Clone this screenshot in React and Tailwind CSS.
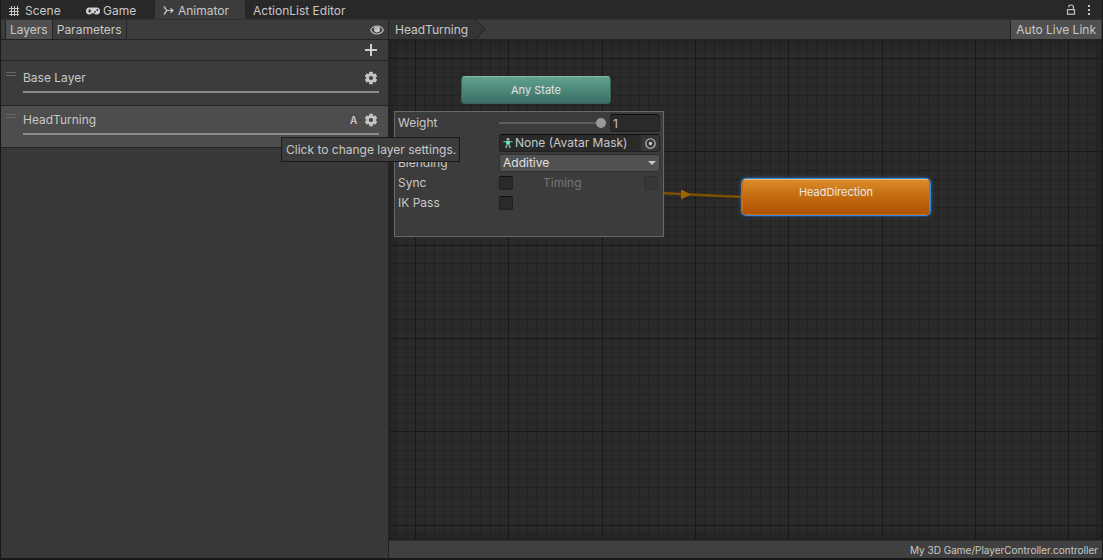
import React, { useState } from "react";

const GRID_STEP = 28 / 3;

const SceneIcon = () => (
  <svg width="12" height="12" viewBox="0 0 12 12" stroke="#c8c8c8" strokeWidth="1" shapeRendering="crispEdges">
    <path d="M3.5 1v10M6.5 1v10M9.5 1v10M1 3.5h10M1 6.5h10M1 9.5h10" />
  </svg>
);

const GameIcon = () => (
  <svg width="14" height="8" viewBox="0 0 14 8">
    <path d="M3.5 0.5h7a3.5 3.5 0 0 1 0 7c-1.200 0-1.800-.8-2.500-1.300h-2C5.300 6.700 4.700 7.500 3.500 7.500a3.500 3.500 0 0 1 0-7z" fill="#d2d2d2" />
    <path d="M2 4h3.400M3.700 2.300v3.400" stroke="#282828" strokeWidth="1.100" />
    <circle cx="9" cy="4.800" r=".9" fill="#282828" />
    <circle cx="11.300" cy="3" r=".9" fill="#282828" />
  </svg>
);

const AnimatorIcon = () => (
  <svg width="11" height="10" viewBox="0 0 11 10" fill="none" stroke="#c8c8c8" strokeWidth="1.200">
    <path d="M1.500 1.500L4 4.500L1.500 7.500M4 4.500h6M7.500 2.300L10 4.500L7.500 6.700" />
    <path d="M0.500 1h2M0.500 8h2" />
  </svg>
);

const GearIcon = () => (
  <svg width="14" height="14" viewBox="0 0 14 14">
    <g fill="#c4c4c4">
      {[0, 60, 120].map((angle) => (
        <rect key={angle} x="5.200" y="0.800" width="3.600" height="12.400" rx=".5" transform={`rotate(${angle} 7 7)`} />
      ))}
    </g>
    <circle cx="7" cy="7" r="3.500" fill="none" stroke="#c4c4c4" strokeWidth="2.600" />
    <circle cx="7" cy="7" r="2.100" fill="#424242" />
  </svg>
);

const EyeIcon = () => (
  <svg width="14" height="10" viewBox="0 0 14 10">
    <path d="M.6 5C2 2.300 4.300 1 7 1s5 1.300 6.400 4C12 7.700 9.700 9 7 9S2 7.700.6 5z" fill="none" stroke="#c4c4c4" strokeWidth="1.100" />
    <circle cx="7" cy="4.500" r="3" fill="#c8c8c8" />
    <path d="M5.600 4.200A1.500 1.500 0 0 1 7 2.800" stroke="#777" strokeWidth=".7" fill="none" />
  </svg>
);

const LockIcon = () => (
  <svg width="10" height="12" viewBox="0 0 10 12" fill="none" stroke="#c4c4c4" strokeWidth="1.200">
    <rect x="1.500" y="5.600" width="7" height="4.600" />
    <path d="M2.800 3.200V2.600C2.800 1.600 3.600 1 4.800 1h.6C6.600 1 7.400 1.800 7.400 3v2.600" />
  </svg>
);

const AvatarIcon = () => (
  <svg width="10" height="12" viewBox="0 0 10 12">
    <path d="M.4 4.600h9.200" stroke="#6f9f98" strokeWidth="1.400" />
    <circle cx="5" cy="2.200" r="1.500" fill="#9aa8a6" />
    <path d="M3 4h4L6.600 7.600H3.400z" fill="#5ff0d0" />
    <path d="M4 7.400L3 11M6 7.400L7 11" stroke="#7aa8a2" strokeWidth="1.600" />
  </svg>
);

const TargetIcon = () => (
  <svg width="11" height="11" viewBox="0 0 11 11">
    <circle cx="5.500" cy="5.500" r="4.700" fill="none" stroke="#c4c4c4" strokeWidth="1.100" />
    <circle cx="5.500" cy="5.500" r="1.700" fill="#c4c4c4" />
  </svg>
);

const Tab = ({ icon, label, className }) => (
  <button className={`flex h-full items-center pt-[2px] ${className}`}>
    {icon}
    {label}
  </button>
);

const LayerRow = ({ name, additive, className }) => (
  <li className={`flex border-b border-[#232323] pr-[9px] pl-[5px] ${className}`}>
    <div className="mt-2 mr-[7px] h-1 w-[10px] border-y border-[#686868]" />
    <div className="grow">
      <div className="flex h-[27px] items-center">
        <span className="grow">{name}</span>
        {additive && <span className="w-[14px] text-[10px] font-semibold">A</span>}
        <button aria-label={`${name} settings`} className="mr-px">
          <GearIcon />
        </button>
      </div>
      <div className="h-[2px] bg-[#8c8c8c]" />
    </div>
  </li>
);

const Grid = () => {
  const lines = Array.from({ length: 300 }, (_, i) => i);
  // every tenth line is a major one
  return (
    <svg className="absolute inset-0 h-full w-full" shapeRendering="crispEdges" aria-hidden="true">
      {[false, true].map((major) => (
        <g key={String(major)} fill={major ? "#181818" : "#222222"}>
          {lines
            .filter((i) => (i % 10 === 0) === major)
            .map((i) => (
              <React.Fragment key={i}>
                <rect x={Math.round(26 + (i - 10) * GRID_STEP)} y="0" width="1" height="100%" />
                <rect x="0" y={Math.round(18 + (i - 10) * GRID_STEP)} width="100%" height="1" />
              </React.Fragment>
            ))}
        </g>
      ))}
    </svg>
  );
};

const checkbox =
  "block size-[14px] appearance-none rounded-[2px] border border-[#212121] border-t-[#0d0d0d] bg-[#2a2a2a] checked:bg-[#777] disabled:border-[#303030] disabled:bg-[#373737]";

const LayerSettings = () => {
  const [weight, setWeight] = useState(1);

  return (
    <div className="absolute top-[71px] left-[5px] h-[126px] w-[270px] border border-[#686868] bg-[#3c3c3c] px-[3px] py-px">
      <div className="grid auto-rows-[20px] grid-cols-[101px_minmax(0,1fr)] items-center">
        <label htmlFor="weight">Weight</label>
        <div className="flex items-center gap-1">
          <input
            id="weight"
            type="range"
            min="0"
            max="1"
            step="0.01"
            value={weight}
            onChange={(e) => setWeight(Number(e.target.value))}
            className="h-[10px] w-[107px] shrink-0 appearance-none bg-[linear-gradient(#5e5e5e,#5e5e5e)] bg-[length:100%_2px] bg-center bg-no-repeat [&::-webkit-slider-thumb]:size-[10px] [&::-webkit-slider-thumb]:appearance-none [&::-webkit-slider-thumb]:rounded-full [&::-webkit-slider-thumb]:bg-[#999]"
          />
          <input
            aria-label="Weight value"
            value={weight}
            onChange={(e) => setWeight(Number(e.target.value) || 0)}
            className="h-[18px] min-w-0 grow rounded-[3px] border border-[#212121] border-t-[#0d0d0d] bg-[#2a2a2a] px-[2px]"
          />
        </div>
        {/* hidden behind the tooltip while it is open */}
        <span aria-hidden="true" />
        <button
          aria-label="Mask"
          className="flex h-[18px] items-center overflow-hidden rounded-[3px] border border-[#202020] border-t-[#0d0d0d] bg-[#2a2a2a] pl-[3px]"
        >
          <AvatarIcon />
          <span className="ml-[2px] grow text-left whitespace-nowrap">None (Avatar Mask)</span>
          <span className="flex h-full w-[18px] items-center justify-center bg-[#373737]">
            <TargetIcon />
          </span>
        </button>
        <label htmlFor="blending">Blending</label>
        <div className="relative">
          <select
            id="blending"
            defaultValue="Additive"
            className="block h-[18px] w-full appearance-none rounded-[3px] border border-[#303030] bg-[#515151] px-[3px] text-[#e0e0e0]"
          >
            <option>Override</option>
            <option>Additive</option>
          </select>
          <svg className="pointer-events-none absolute top-[7px] right-1" width="8" height="4" viewBox="0 0 8 4">
            <path d="M0 0h8L4 4z" fill="#c8c8c8" />
          </svg>
        </div>
        <label htmlFor="sync">Sync</label>
        <div className="flex items-center">
          <input id="sync" type="checkbox" className={checkbox} />
          <label htmlFor="timing" className="ml-[30px] grow text-[#757575]">
            Timing
          </label>
          <input id="timing" type="checkbox" disabled className={`mr-[2px] ${checkbox}`} />
        </div>
        <label htmlFor="ik">IK Pass</label>
        <input id="ik" type="checkbox" className={checkbox} />
      </div>
    </div>
  );
};

const App = () => {
  return (
    <div className="relative flex h-screen flex-col overflow-hidden border-x border-b-2 border-[#191919] bg-[#383838] font-['Inter',sans-serif] text-[12px] leading-4 text-[#c8c8c8]">
      <header className="flex h-[19px] shrink-0 bg-[#282828]">
        <Tab icon={<SceneIcon />} label="Scene" className="w-[77px] gap-[5px] pl-[7px]" />
        <Tab icon={<GameIcon />} label="Game" className="w-[77px] gap-[3px] pl-2" />
        <Tab icon={<AnimatorIcon />} label="Animator" className="w-[90px] gap-1 rounded-t-[2px] bg-[#3c3c3c] pl-2" />
        <Tab label="ActionList Editor" className="px-2" />
        <div className="ml-auto flex items-center gap-3 pr-3">
          <button aria-label="Lock">
            <LockIcon />
          </button>
          <button aria-label="Menu" className="flex flex-col gap-[2px]">
            <i className="size-[2px] bg-[#c4c4c4]" />
            <i className="size-[2px] bg-[#c4c4c4]" />
            <i className="size-[2px] bg-[#c4c4c4]" />
          </button>
        </div>
      </header>

      <div className="flex min-h-0 grow">
        <aside className="w-[388px] shrink-0 border-r border-[#232323]">
          <div className="flex h-[21px] items-stretch border-y border-t-[#303030] border-b-[#232323] bg-[#3c3c3c] pl-1">
            <button className="border-x border-[#232323] bg-[#505050] px-1">Layers</button>
            <button className="border-r border-[#232323] px-1">Parameters</button>
            <button aria-label="Show preview" className="mr-1 ml-auto">
              <EyeIcon />
            </button>
          </div>
          <div className="flex h-[21px] items-center justify-end border-b border-[#232323] bg-[#3c3c3c] pr-[11px]">
            <button aria-label="Add layer">
              <svg width="12" height="12" viewBox="0 0 12 12" fill="#d0d0d0">
                <path d="M5 0h2v5h5v2H7v5H5V7H0V5h5z" />
              </svg>
            </button>
          </div>
          <ul>
            <LayerRow name="Base Layer" className="h-[45px] bg-[#3c3c3c] pt-[3px]" />
            <LayerRow name="HeadTurning" additive className="h-[42px] bg-[#4d4d4d]" />
          </ul>
        </aside>

        <main className="flex min-w-0 grow flex-col">
          <div className="flex h-[21px] shrink-0 border-y border-t-[#303030] border-b-[#232323] bg-[#3c3c3c]">
            <button className="bg-[#353535] pl-[6px]">HeadTurning</button>
            <svg width="18" height="19" viewBox="0 0 18 19">
              <path d="M0 0h8l9 9.500L8 19H0z" fill="#353535" />
              <path d="M8 0l9 9.500L8 19" fill="none" stroke="#232323" />
            </svg>
            <button className="mr-px ml-auto border-l border-[#232323] bg-[#505050] px-[5px]">Auto Live Link</button>
          </div>

          <div className="relative grow overflow-hidden bg-[#2a2a2a]">
            <Grid />
            <div className="absolute inset-0 shadow-[inset_0_0_8px_#1a1a1a]" />
            <svg className="absolute top-0 left-0" width="360" height="200" viewBox="0 0 360 200">
              <path d="M147 147L353 157" stroke="#7d5000" strokeWidth="2.600" />
              <path d="M292 149.500l10 5-10 5z" fill="#9c6500" />
            </svg>
            <button className="absolute top-9 left-[72px] h-7 w-[150px] rounded-[4px] border border-[#3b665e] border-t-[#8bb9a9] bg-linear-to-b from-[#5fa28e] to-[#3b6f66] text-[11px] text-[#e4e4e4]">
              Any State
            </button>
            <button className="absolute top-[139px] left-[353px] flex h-9 w-[188px] justify-center rounded-[4px] border border-[#c66d16] border-t-[#f0ba70] bg-linear-to-b from-[#d98c28] via-[#c46a10] to-[#ad5200] pt-1 text-[11px] text-[#e8e8e8] shadow-[0_0_0_1px_#3488d8,0_0_4px_#3488d8]">
              HeadDirection
            </button>
            <LayerSettings />
          </div>

          <footer className="h-[18px] shrink-0 border-t border-[#303030] bg-[#404040] pr-1 text-right text-[10px] leading-[18px]">
            My 3D Game/PlayerController.controller
          </footer>
        </main>
      </div>

      <div
        role="tooltip"
        className="absolute top-[137px] left-[280px] border border-[#191919] bg-[#3c3c3c] py-1 pr-[3px] pl-1 leading-[15px] whitespace-nowrap"
      >
        Click to change layer settings.
      </div>
    </div>
  );
};

export default App;
